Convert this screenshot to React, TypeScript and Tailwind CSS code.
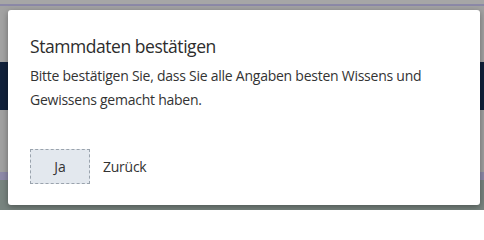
export default function App() {
  return (
    <div className="relative w-[484px] h-[210px] overflow-hidden bg-[#a2a2a2] font-['Open_Sans',sans-serif]">
      {/* dimmed page behind the dialog */}
      <div className="flex flex-col">
        <div className="h-[4px] bg-[#a6a6a6]" />
        <div className="h-[2px] bg-[#8b88a6]" />
        <div className="h-[56px] bg-[#a2a2a2]" />
        <div className="h-[48px] bg-[#10203a]" />
        <div className="h-[62px] bg-[#a0a0a0]" />
        <div className="h-[8px] bg-[#8d89a8]" />
        <div className="h-[30px] bg-[#78847f]" />
      </div>

      <div className="absolute left-[8px] top-[10px] w-[472px] h-[195px] bg-white rounded-[3px] shadow-[0_2px_6px_rgba(0,0,0,0.35)] px-[22px] pt-[24px] flex flex-col">
        <h2 className="text-[17.5px] leading-[24px] tracking-[-0.45px] text-[#2d2d2d]">Stammdaten bestätigen</h2>
        <p className="mt-[6px] text-[14px] leading-[24px] tracking-[-0.25px] text-[#333]">
          Bitte bestätigen Sie, dass Sie alle Angaben besten Wissens und Gewissens gemacht haben.
        </p>
        <div className="mt-[37px] flex items-center gap-[13px]">
          <button className="w-[60px] h-[35px] bg-[#e3e8ee] border border-dashed border-[#9aa3ad] text-[14px] text-[#333]">
            Ja
          </button>
          <button className="text-[14px] tracking-[-0.25px] text-[#333]">Zurück</button>
        </div>
      </div>
    </div>
  )
}
